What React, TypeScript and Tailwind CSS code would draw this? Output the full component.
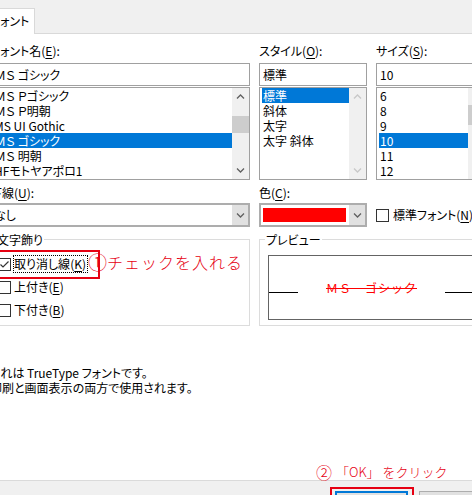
import React from "react";

function Chevron({ up = false, muted = false }: { up?: boolean; muted?: boolean }) {
  return (
    <svg width="9" height="5" viewBox="0 0 9 5" className={muted ? "text-[#c8c8c8]" : "text-[#606060]"}>
      <polyline
        points={up ? "1,4.5 4.5,1 8,4.5" : "1,0.5 4.5,4 8,0.5"}
        fill="none"
        stroke="currentColor"
        strokeWidth="1.3"
      />
    </svg>
  );
}

function Scrollbar({ offset = 0, thumb = 0, disabled = false }: { offset?: number; thumb?: number; disabled?: boolean }) {
  return (
    <div className="flex w-[17px] shrink-0 flex-col bg-[#f0f0f0]">
      <div className="flex h-[17px] items-center justify-center">
        <Chevron up muted={disabled} />
      </div>
      <div className="flex-1">
        {!disabled && (
          <>
            <div style={{ height: offset }} />
            <div className="bg-[#cdcdcd]" style={{ height: thumb }} />
          </>
        )}
      </div>
      <div className="flex h-[17px] items-center justify-center">
        <Chevron muted={disabled} />
      </div>
    </div>
  );
}

function ListBox({
  items,
  selected,
  offset,
  thumb,
  disabled,
}: {
  items: string[];
  selected: number;
  offset?: number;
  thumb?: number;
  disabled?: boolean;
}) {
  return (
    <div className="mt-[1px] flex h-[93px] border border-[#a0a0a0] bg-white">
      <div className="flex-1 overflow-hidden pl-[2px]">
        {items.map((it, i) => (
          <div
            key={it}
            className={`h-[15px] whitespace-nowrap pl-[1px] leading-[15px] ${
              i === selected ? "bg-[#0078d7] text-white" : "text-black"
            }`}
          >
            {it}
          </div>
        ))}
      </div>
      <Scrollbar offset={offset} thumb={thumb} disabled={disabled} />
    </div>
  );
}

function Label({ text, accel }: { text: string; accel: string }) {
  return (
    <div className="h-[15px] whitespace-nowrap leading-[15px]">
      {text}(<span className="underline underline-offset-2">{accel}</span>):
    </div>
  );
}

function Input({ value }: { value: string }) {
  return (
    <div className="mt-[5px] h-[23px] whitespace-nowrap border border-[#a0a0a0] bg-white pl-[3px] leading-[21px]">
      {value}
    </div>
  );
}

function DropButton() {
  return (
    <div className="flex w-[16px] shrink-0 items-center justify-center bg-[#e1e1e1]">
      <Chevron />
    </div>
  );
}

function CheckBox({ checked = false }: { checked?: boolean }) {
  return (
    <div className="flex h-[13px] w-[13px] shrink-0 items-center justify-center border border-[#333333] bg-white">
      {checked && (
        <svg width="11" height="11" viewBox="0 0 11 11">
          <polyline points="1.5,5.5 4,8 9.5,2.5" fill="none" stroke="#333333" strokeWidth="1.2" />
        </svg>
      )}
    </div>
  );
}

function CheckRow({ text, accel, checked = false, focused = false }: { text: string; accel: string; checked?: boolean; focused?: boolean }) {
  return (
    <div className="flex h-[18px] items-center">
      <CheckBox checked={checked} />
      <div
        className={`ml-[2px] h-[18px] whitespace-nowrap border pr-[1px] leading-[16px] ${
          focused ? "border-dotted border-black" : "border-transparent"
        }`}
      >
        {text}(<span className="underline underline-offset-2">{accel}</span>)
      </div>
    </div>
  );
}

export default function App() {
  return (
    <div className="relative flex h-[495px] w-[472px] flex-col overflow-hidden bg-white text-[12px] text-black [font-family:'Noto_Sans_CJK_JP',sans-serif] [font-feature-settings:'palt']">
      {/* tab strip */}
      <div className="flex h-[34px] shrink-0 items-end border-b border-[#d9d9d9] bg-[#f0f0f0]">
        <div className="-mb-px ml-[-16px] h-[26px] w-[51px] border-r border-t border-[#d9d9d9] bg-white pl-[6px] leading-[24px]">
          フォント
        </div>
      </div>

      <div className="-ml-[10px] flex flex-col pt-[9px]">
        {/* font / style / size */}
        <div className="flex gap-[9px]">
          <div className="w-[260px] shrink-0">
            <Label text="フォント名" accel="E" />
            <Input value="ＭＳ ゴシック" />
            <ListBox
              items={["ＭＳ Ｐゴシック", "ＭＳ Ｐ明朝", "MS UI Gothic", "ＭＳ ゴシック", "ＭＳ 明朝", "HFモトヤアポロ1"]}
              selected={3}
              offset={11}
              thumb={17}
            />
          </div>
          <div className="w-[108px] shrink-0">
            <Label text="スタイル" accel="O" />
            <Input value="標準" />
            <ListBox items={["標準", "斜体", "太字", "太字 斜体"]} selected={0} disabled />
          </div>
          <div className="w-[110px] shrink-0">
            <Label text="サイズ" accel="S" />
            <Input value="10" />
            <ListBox items={["6", "8", "9", "10", "11", "12"]} selected={3} offset={0} thumb={20} />
          </div>
        </div>

        {/* underline / color */}
        <div className="mt-[5px] flex gap-[9px]">
          <div className="w-[260px] shrink-0">
            <Label text="下線" accel="U" />
            <div className="mt-[3px] flex h-[24px] border-2 border-[#adadad] bg-white">
              <div className="flex-1 whitespace-nowrap pl-[2px] leading-[20px]">なし</div>
              <DropButton />
            </div>
          </div>
          <div className="w-[108px] shrink-0">
            <Label text="色" accel="C" />
            <div className="mt-[3px] flex h-[24px] border-2 border-[#adadad] bg-white">
              <div className="flex-1 pl-[2px] pr-[3px] pt-[3px]">
                <div className="h-[14px] bg-[#ff0000]" />
              </div>
              <DropButton />
            </div>
          </div>
          <div className="flex h-[24px] items-center self-end whitespace-nowrap">
            <CheckBox />
            <span className="ml-[4px]">
              標準フォント(<span className="underline underline-offset-2">N</span>)
            </span>
          </div>
        </div>

        {/* effects / preview */}
        <div className="mt-[12px] flex gap-[9px]">
          <div className="relative h-[87px] w-[260px] shrink-0 border border-[#dcdcdc] pl-[7px] pt-[15px]">
            <div className="absolute -top-[8px] left-[5px] bg-white px-[1px] leading-[15px]">文字飾り</div>
            <div className="flex flex-col gap-[5px]">
              <CheckRow text="取り消し線" accel="K" checked focused />
              <CheckRow text="上付き" accel="E" />
              <CheckRow text="下付き" accel="B" />
            </div>
          </div>
          <div className="relative h-[87px] w-[230px] shrink-0 border border-[#dcdcdc] pl-[8px] pt-[15px]">
            <div className="absolute -top-[8px] left-[5px] bg-white px-[1px] leading-[15px]">プレビュー</div>
            <div className="h-[65px] w-[207px] border border-[#646464] pt-[24px]">
              <div className="flex h-[16px] items-end justify-between">
                <div className="mb-[3px] h-px w-[29px] bg-black" />
                <div className="whitespace-nowrap leading-[16px] tracking-[1px] text-[#ff0000] line-through [font-feature-settings:normal]">
                  ＭＳ　ゴシック
                </div>
                <div className="mb-[3px] h-px w-[29px] bg-black" />
              </div>
            </div>
          </div>
        </div>

        {/* description */}
        <div className="mt-[39px] whitespace-nowrap leading-[15px]">
          <div>これは TrueType フォントです。</div>
          <div>印刷と画面表示の両方で使用されます。</div>
        </div>
      </div>

      {/* button strip */}
      <div className="mt-auto flex h-[15px] shrink-0 gap-[11px] border-t border-[#dadada] bg-[#f0f0f0] pl-[335px] pt-[10px]">
        <div className="h-[23px] w-[73px] shrink-0 border-2 border-[#0078d7] bg-[#e1e1e1] text-center">OK</div>
        <div className="h-[23px] w-[75px] shrink-0 border border-[#adadad] bg-[#e1e1e1] text-center">キャンセル</div>
      </div>

      {/* annotations */}
      <div className="absolute left-[-4px] top-[250px] h-[29px] w-[104px] border-2 border-[#e60012]" />
      <div className="absolute left-[88px] top-[252px] flex items-center whitespace-nowrap text-[16px] font-light leading-[20px] tracking-[1px] text-[#e60012] [font-feature-settings:normal]">
        <span className="text-[19px] tracking-[0px]">①</span>
        <span>チェックを入れる</span>
      </div>
      <div className="absolute left-[316px] top-[464px] flex items-center whitespace-nowrap text-[13px] font-light leading-[16px] text-[#e60012] [font-feature-settings:normal]">
        <span className="text-[16px]">②</span>
        <span className="ml-[4px]">「OK」 をクリック</span>
      </div>
      <div className="absolute left-[330px] top-[487px] h-[20px] w-[84px] border-2 border-[#e60012]" />
    </div>
  );
}
